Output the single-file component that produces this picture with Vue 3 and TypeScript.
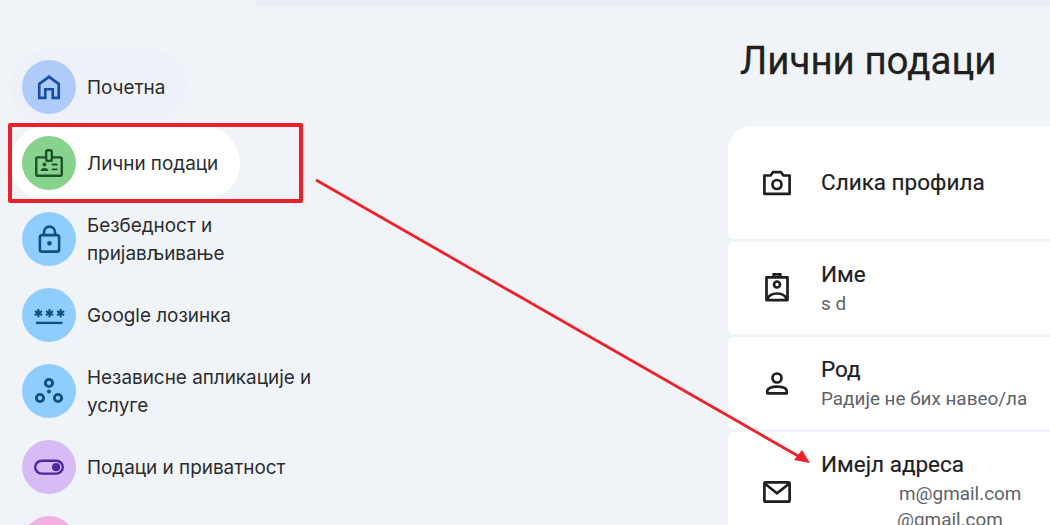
<script setup lang="ts">
interface NavItem { lines: string[]; tone: string; icon: string; state?: string }
const nav: NavItem[] = [
  { lines: ['Почетна'], tone: 'periwinkle', icon: 'home', state: 'hover' },
  { lines: ['Лични подаци'], tone: 'green', icon: 'badge', state: 'active' },
  { lines: ['Безбедност и', 'пријављивање'], tone: 'sky', icon: 'lock' },
  { lines: ['Google лозинка'], tone: 'sky', icon: 'password' },
  { lines: ['Независне апликације и', 'услуге'], tone: 'sky', icon: 'apps' },
  { lines: ['Подаци и приватност'], tone: 'violet', icon: 'toggle' },
  { lines: [], tone: 'pink', icon: 'none' },
]
interface Row { title: string; subs: { text: string; cls?: string }[]; icon: string; tall?: boolean }
const rows: Row[] = [
  { title: 'Слика профила', subs: [], icon: 'camera', tall: true },
  { title: 'Име', subs: [{ text: 's d' }], icon: 'contact' },
  { title: 'Род', subs: [{ text: 'Радије не бих навео/ла' }], icon: 'person' },
  { title: 'Имејл адреса', subs: [{ text: 'm@gmail.com', cls: 'indent-a' }, { text: '@gmail.com', cls: 'indent-b' }], icon: 'mail' },
]
</script>

<template>
  <div class="page">
    <div class="topbar"></div>
    <div class="content">
      <nav class="nav">
        <a v-for="item in nav" :key="item.tone + item.icon" class="item" :class="item.state">
          <span class="badge" :class="item.tone">
            <svg v-if="item.icon === 'home'" viewBox="0 0 24 24" width="36" height="36" fill="none" stroke="currentColor" stroke-width="1.8">
              <path d="M5.500 19.200V10L12 5.200 18.500 10v9.200h-4v-5.700h-5v5.700z" />
            </svg>
            <svg v-else-if="item.icon === 'badge'" viewBox="0 0 24 24" width="34" height="34" fill="none" stroke="currentColor" stroke-width="1.700">
              <rect x="3" y="8" width="18" height="13" rx="1" />
              <rect x="10" y="3" width="4" height="7.500" rx="1.400" fill="#87d38d" />
              <circle cx="8.800" cy="13" r="1.400" fill="currentColor" stroke="none" />
              <path d="M6 17.600c.3-1.500 1.400-2 2.800-2s2.500.5 2.800 2z" fill="currentColor" stroke="none" />
              <path d="M14 13h4M14 16.500h4" stroke-width="1.400" />
            </svg>
            <svg v-else-if="item.icon === 'lock'" viewBox="0 0 24 24" width="33" height="33" fill="none" stroke="currentColor" stroke-width="1.900">
              <rect x="5" y="8.800" width="14" height="12" rx="1.600" />
              <path d="M8 8.800V6.600a4 4 0 0 1 8 0v2.200" />
              <circle cx="12" cy="14.800" r="1.700" fill="currentColor" stroke="none" />
            </svg>
            <svg v-else-if="item.icon === 'password'" viewBox="0 0 30 24" width="37" height="30" fill="none" stroke="currentColor">
              <path d="M4 18.400h21.500" stroke-width="1.900" />
              <g stroke-width="1.700">
                <path d="M6 7.200v6.600M3.100 8.850l5.800 3.300M8.900 8.850l-5.800 3.300" />
                <path d="M15 7.200v6.600M12.100 8.850l5.800 3.300M17.900 8.850l-5.800 3.300" />
                <path d="M24 7.200v6.600M21.100 8.850l5.800 3.300M26.900 8.850l-5.800 3.300" />
              </g>
            </svg>
            <svg v-else-if="item.icon === 'apps'" viewBox="0 0 24 24" width="32" height="32" fill="none" stroke="currentColor" stroke-width="2.200">
              <circle cx="12" cy="6" r="2.700" />
              <circle cx="5.250" cy="17.250" r="2.700" />
              <circle cx="18.750" cy="17.250" r="2.700" />
              <circle cx="12" cy="12.300" r="1.500" fill="currentColor" stroke="none" />
            </svg>
            <svg v-else-if="item.icon === 'toggle'" viewBox="0 0 24 24" width="36" height="36" fill="none" stroke="currentColor" stroke-width="1.600">
              <rect x="2.800" y="7.800" width="18.400" height="8.600" rx="4.300" />
              <circle cx="16.700" cy="12.100" r="2.700" fill="currentColor" stroke="none" />
            </svg>
          </span>
          <span v-if="item.lines.length" class="label"><span v-for="line in item.lines" :key="line" class="line">{{ line }}</span></span>
        </a>
      </nav>
      <main class="main">
        <h1 class="title">Лични подаци</h1>
        <div class="cards">
          <section v-for="row in rows" :key="row.title" class="card" :class="{ tall: row.tall }">
            <span class="rowicon">
              <svg v-if="row.icon === 'camera'" viewBox="0 0 24 24" width="36" height="36" fill="none" stroke="currentColor" stroke-width="1.800">
                <path d="M3.600 19.200V7h4.100L9.300 4.800h5.400L16.300 7h4.100v12.200z" stroke-linejoin="round" />
                <circle cx="12" cy="13" r="3" />
              </svg>
              <svg v-else-if="row.icon === 'contact'" viewBox="0 0 24 24" width="36" height="36" fill="none" stroke="currentColor" stroke-width="1.800">
                <path d="M5 4.200h14v15.200H5z" stroke-linejoin="round" />
                <path d="M9.800 4.200V2.300h4.400v1.900" />
                <circle cx="12" cy="9" r="2" />
                <path d="M5.500 18.800c1-2.800 3.300-3.800 6.500-3.800s5.500 1 6.500 3.800" />
              </svg>
              <svg v-else-if="row.icon === 'person'" viewBox="0 0 24 24" width="36" height="36" fill="none" stroke="currentColor" stroke-width="1.800">
                <circle cx="12" cy="8" r="3" />
                <path d="M5.500 18.200v-1.300c0-2.300 3.200-3.200 6.500-3.200s6.500.9 6.500 3.200v1.300z" stroke-linejoin="round" />
              </svg>
              <svg v-else viewBox="0 0 24 24" width="36" height="36" fill="none" stroke="currentColor" stroke-width="1.800">
                <rect x="3.600" y="5.600" width="16.800" height="12.800" rx=".8" />
                <path d="M4 6.500l8 6.300 8-6.300" />
              </svg>
            </span>
            <div class="rowtext">
              <div class="rowtitle">{{ row.title }}</div>
              <div v-for="sub in row.subs" :key="sub.text" class="rowsub" :class="sub.cls">{{ sub.text }}</div>
            </div>
          </section>
        </div>
      </main>
    </div>

    <!-- Hand-drawn annotation lying over the screenshot -->
    <div class="redbox"></div>
    <svg class="arrow" viewBox="0 0 1050 525" width="1050" height="525">
      <line x1="316" y1="180" x2="799" y2="456.500" stroke="#ee2129" stroke-width="2.800" />
      <polygon points="810,463 794,460 802,450" fill="#ee2129" />
    </svg>
  </div>
</template>

<style>
html, body { margin: 0; background: #f0f4f9; }
</style>

<style scoped>
.page {
  position: relative;
  width: 1050px;
  height: 525px;
  overflow: hidden;
  background: #f0f4f9;
  font-family: Roboto, "Liberation Sans", sans-serif;
  color: #1f1f1f;
}
.topbar {
  height: 6px;
  margin-left: 255px;
  background: #e9eef6;
  border-bottom-left-radius: 14px;
}
.content {
  display: flex;
}
.nav {
  box-sizing: border-box;
  width: 728px;
  flex: none;
  padding: 43px 0 0 10px;
  display: flex;
  flex-direction: column;
}
.item {
  box-sizing: border-box;
  width: fit-content;
  min-height: 76px;
  display: flex;
  align-items: center;
  gap: 11px;
  padding: 0 22px 0 12px;
  border-radius: 38px;
  font-family: Inter, Roboto, sans-serif;
  font-size: 18.900px;
  line-height: 28px;
  color: #2b2c2e;
}
.item.hover { background: #eef1f7; }
.item.active { background: #ffffff; }
.label { padding-top: 2px; }
.badge {
  width: 54px;
  height: 54px;
  border-radius: 50%;
  flex: none;
  display: flex;
  align-items: center;
  justify-content: center;
}
.periwinkle { background: #aecbfa; color: #174ea6; }
.green { background: #87d38d; color: #1e5128; }
.sky { background: #8fcdff; color: #12507f; }
.violet { background: #d7bbf5; color: #4a2a9e; }
.pink { background: #f3b1e2; color: #7a1f66; }
.line { display: block; }
.main {
  flex: none;
  width: 400px;
}
.title {
  margin: 0;
  height: 120px;
  box-sizing: border-box;
  padding: 34px 0 0 12px;
  font-family: Roboto, sans-serif;
  font-size: 38.500px;
  line-height: 42px;
  font-weight: 400;
  color: #1f1f1f;
  -webkit-text-stroke: 0.3px #1f1f1f;
}
.cards {
  display: flex;
  flex-direction: column;
  gap: 3px;
}
.card {
  box-sizing: border-box;
  height: 92px;
  background: #fff;
  border-radius: 6px;
  display: flex;
  align-items: center;
  gap: 26px;
  padding: 19px 0 17px 31px;
}
.card.tall {
  height: 113px;
  padding: 0 0 0 31px;
  border-radius: 24px 0 6px 6px;
}
.card:last-child {
  height: 110px;
  align-items: flex-start;
}
.card:last-child .rowicon { margin-top: 23px; }
.rowicon {
  flex: none;
  display: flex;
  width: 36px;
  height: 36px;
  color: #1f1f1f;
}
.rowtitle {
  font-size: 22.500px;
  line-height: 27px;
  padding-bottom: 1px;
  font-weight: 400;
  color: #1f1f1f;
  -webkit-text-stroke: 0.2px #1f1f1f;
}
.rowsub {
  font-size: 18.900px;
  line-height: 26px;
  color: #5f6368;
}
.rowtitle + .rowsub { margin-top: 2px; }
.indent-a { padding-left: 78px; }
.indent-b { padding-left: 76px; }
.redbox {
  position: absolute;
  left: 8px;
  top: 123px;
  width: 295px;
  height: 80px;
  box-sizing: border-box;
  border: 4px solid #ee2129;
  border-radius: 2px;
}
.arrow {
  position: absolute;
  left: 0;
  top: 0;
  pointer-events: none;
}
</style>
